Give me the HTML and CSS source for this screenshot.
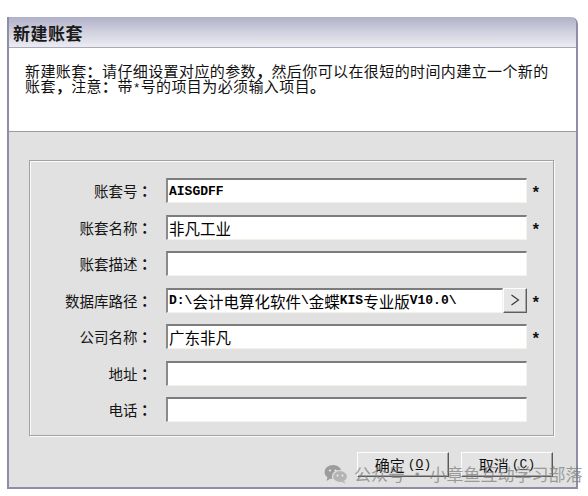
FILE: index.html
```html
<!DOCTYPE html>
<html lang="zh-CN">
<head>
<meta charset="utf-8">
<title>新建账套</title>
<link rel="stylesheet" href="styles.css">
</head>
<body>
<div class="window">
  <div class="titlebar">新建账套</div>
  <div class="intro">
    <p>新建账套<span class="p">：</span>请仔细设置对应的参数<span class="p">，</span>然后你可以在很短的时间内建立一个新的<br>账套<span class="p">，</span>注意<span class="p">：</span>带<span class="lat">*</span>号的项目为必须输入项目<span class="p">。</span></p>
  </div>
  <div class="body">
    <div class="group">
      <label class="lbl">账套号<span class="p">：</span></label>
      <div class="field"><span class="lat">AISGDFF</span></div>
      <span class="req">*</span>

      <label class="lbl">账套名称<span class="p">：</span></label>
      <div class="field">非凡工业</div>
      <span class="req">*</span>

      <label class="lbl">账套描述<span class="p">：</span></label>
      <div class="field"></div>
      <span class="req"></span>

      <label class="lbl">数据库路径<span class="p">：</span></label>
      <div class="pathbox">
        <div class="field"><span class="lat">D:\</span>会计电算化软件<span class="lat">\</span>金蝶<span class="lat">KIS</span>专业版<span class="lat">V10.0\</span></div>
        <button class="browse" type="button" aria-label="浏览">
          <svg width="10" height="12" viewBox="0 0 10 12"><polyline points="1.5,1 8.5,6 1.5,11" fill="none" stroke="#333" stroke-width="1.1"/></svg>
        </button>
      </div>
      <span class="req">*</span>

      <label class="lbl">公司名称<span class="p">：</span></label>
      <div class="field">广东非凡</div>
      <span class="req">*</span>

      <label class="lbl">地址<span class="p">：</span></label>
      <div class="field"></div>
      <span class="req"></span>

      <label class="lbl">电话<span class="p">：</span></label>
      <div class="field"></div>
      <span class="req"></span>
    </div>
    <div class="actions">
      <button class="btn" type="button">确定<span class="lat">(<u>O</u>)</span></button>
      <button class="btn" type="button">取消<span class="lat">(<u>C</u>)</span></button>
    </div>
  </div>
  <div class="watermark">
    <svg width="24" height="20" viewBox="0 0 24 20">
      <ellipse cx="9" cy="8" rx="8.5" ry="7" fill="#9c9c9c"/>
      <path d="M3.5 13 L2.5 17 L7 14.2 Z" fill="#9c9c9c"/>
      <ellipse cx="16" cy="12.5" rx="7.5" ry="6" fill="#b4b4b4" stroke="#e1e1e1" stroke-width="1.2"/>
      <path d="M20 17 L21.5 19.6 L17.5 18 Z" fill="#b4b4b4"/>
      <circle cx="6" cy="6.5" r="1.1" fill="#e8e8e8"/>
      <circle cx="11.5" cy="6.5" r="1.1" fill="#e8e8e8"/>
      <circle cx="13.5" cy="11.5" r="0.9" fill="#f0f0f0"/>
      <circle cx="18.5" cy="11.5" r="0.9" fill="#f0f0f0"/>
    </svg>
    <span>公众号 · 小章鱼互动学习部落</span>
  </div>
</div>
</body>
</html>
```
FILE: styles.css
```css
* { box-sizing: border-box; }

html, body {
  margin: 0;
  background: #ffffff;
}

body {
  font-family: "Noto Sans CJK SC", "Noto Sans", sans-serif;
  color: #111;
}

.lat {
  font-family: "Liberation Mono", monospace;
}

/* centred full-width punctuation */
.p {
  font-family: "Noto Sans CJK TC", "Noto Sans CJK SC", sans-serif;
  font-weight: 700;
}

/* dialog frame */
.window {
  position: relative;
  margin: 17px 0 0 7px;
  width: 571px;
  height: 472px;
  display: flex;
  flex-direction: column;
  border-left: 2px solid #8e8ea6;
  border-right: 2px solid #8e8ea6;
  border-bottom: 2px solid #8e8ea6;
  border-top-right-radius: 7px;
  background: #e1e1e1;
}

.titlebar {
  height: 31px;
  flex: none;
  padding: 0 0 0 4px;
  display: flex;
  align-items: center;
  font-size: 17px;
  font-weight: 700;
  letter-spacing: 0.5px;
  color: #1a1a1a;
  background: linear-gradient(#b0b0c8 0%, #cbcbdc 40%, #e1e1ea 80%, #ececf1 100%);
  border-top-right-radius: 6px;
  border-bottom: 1px solid #a9a9bb;
}

.intro {
  height: 84px;
  flex: none;
  background: #fff;
  border-bottom: 1px solid #9c9c9c;
  padding: 15px 0 0 16px;
}

.intro p {
  margin: 0;
  font-size: 15px;
  line-height: 15px;
  letter-spacing: 0.4px;
  white-space: nowrap;
}

.intro .lat {
  font-size: 13px;
  letter-spacing: 0;
}

.body {
  flex: 1;
  padding: 28px 22px 0 20px;
  display: flex;
  flex-direction: column;
}

/* etched group frame with the form grid */
.group {
  height: 276px;
  border: 1px solid #a2a2a2;
  box-shadow: inset 1px 1px 0 #fbfbfb, 1px 1px 0 #fbfbfb;
  padding: 17px 8px 0 0;
  display: grid;
  grid-template-columns: 122px 361px 12px;
  grid-auto-rows: 25px;
  column-gap: 14px;
  row-gap: 11.5px;
}

.lbl {
  display: flex;
  align-items: center;
  justify-content: flex-end;
  font-size: 14.5px;
  color: #151515;
  white-space: nowrap;
}

.field {
  height: 25px;
  background: #fff;
  border-top: 2px solid #7c7c7c;
  border-left: 2px solid #8a8a8a;
  border-right: 1px solid #f3f3ea;
  border-bottom: 1px solid #f3f3ea;
  padding: 0 0 0 1px;
  display: flex;
  align-items: center;
  font-size: 15.5px;
  white-space: nowrap;
  overflow: hidden;
  color: #000;
}

.field .lat {
  font-size: 13px;
  font-weight: 700;
}

.pathbox {
  display: flex;
}

.pathbox .field {
  width: 338px;
}

.browse {
  width: 24px;
  height: 25px;
  margin: 0;
  padding: 0;
  display: flex;
  align-items: center;
  justify-content: center;
  background: #e6e6e6;
  border: 1px solid;
  border-color: #fdfdfd #5e5e5e #5e5e5e #fdfdfd;
  box-shadow: inset -1px -1px 0 #a8a8a8;
}

.req {
  display: flex;
  align-items: center;
  justify-content: flex-start;
  margin-left: -10px;
  padding-top: 7px;
  font-family: "Liberation Mono", monospace;
  font-weight: 700;
  font-size: 16px;
  color: #111;
}

.actions {
  display: flex;
  justify-content: flex-end;
  gap: 12px;
  margin: 16px 1px 0 0;
}

.btn {
  width: 92px;
  height: 25px;
  margin: 0;
  padding: 0;
  font-family: "Noto Sans CJK SC", sans-serif;
  font-size: 15px;
  color: #111;
  background: #e3e3e3;
  border: 1px solid;
  border-color: #fdfdfd #5a5a5a #5a5a5a #fdfdfd;
  box-shadow: inset -1px -1px 0 #a4a4a4;
  display: flex;
  align-items: center;
  justify-content: center;
}

.btn .lat {
  font-size: 13px;
  margin-left: 3px;
}

/* account watermark laid over the button row */
.watermark {
  position: absolute;
  left: 315px;
  top: 444px;
  display: flex;
  align-items: center;
  gap: 6px;
  font-size: 17px;
  color: rgba(125, 125, 125, 0.72);
  white-space: nowrap;
  pointer-events: none;
}
```
